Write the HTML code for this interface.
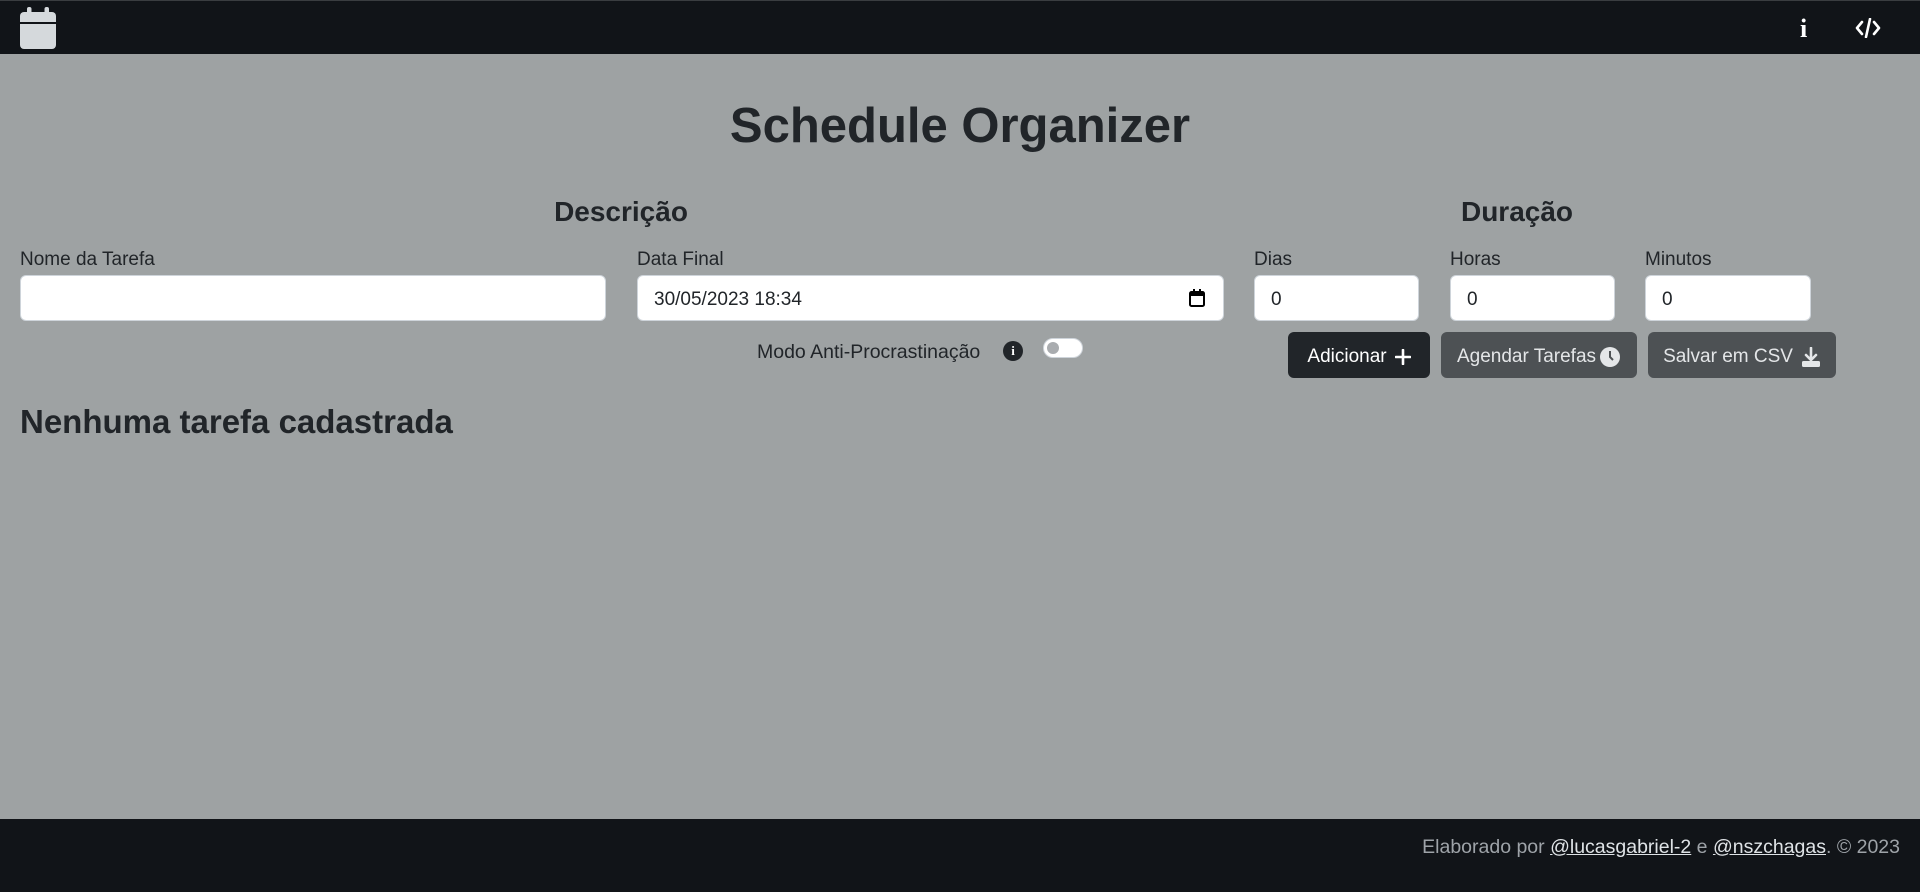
<!DOCTYPE html>
<html><head><meta charset="utf-8"><style>
*{box-sizing:border-box;margin:0;padding:0}
body{width:1920px;height:892px;background:#9ea2a3;font-family:"Liberation Sans",sans-serif;color:#212529;position:relative;overflow:hidden}
.nav{position:absolute;left:0;top:0;width:1920px;height:54px;background:#111418;border-top:1px solid #3a3d40}
.abs{position:absolute}
h1{position:absolute;left:0;width:1920px;top:98px;text-align:center;font-size:49px;font-weight:bold}
.h3{position:absolute;font-size:28px;font-weight:bold;transform:translateX(-50%);top:196px;white-space:nowrap}
.lbl{position:absolute;top:249px;font-size:19px}
.inp{position:absolute;top:275px;height:46px;background:#fff;border:1px solid #ced4da;border-radius:6px;font-size:19px;padding:13px 16px 0}
.btn{position:absolute;top:332px;height:46px;border-radius:6px;color:#fff;font-size:19px;display:flex;align-items:center;justify-content:center;gap:8px;padding-top:4px}
.footer{position:absolute;left:0;top:819px;width:1920px;height:73px;background:#111418;color:#9ea3a8;font-size:19.5px;text-align:right;padding:17px 20px 0 0}
.footer u{color:#dfe3e6}
</style></head><body>
<div class="nav">
<svg class="abs" style="left:20px;top:6px" width="36" height="42" viewBox="0 0 36 42"><rect x="7" y="0" width="4.5" height="9" rx="2" fill="#d5d9dc"/><rect x="24.5" y="0" width="4.5" height="9" rx="2" fill="#d5d9dc"/><rect x="0" y="5" width="36" height="37" rx="4" fill="#d5d9dc"/><rect x="0" y="15" width="36" height="2" fill="#111418"/></svg>
<div class="abs" style="left:1800px;top:13px;color:#fff;font-size:26px;font-weight:bold;font-family:'Liberation Serif',serif">i</div>
<svg class="abs" style="left:1855px;top:17px" width="26" height="20" viewBox="0 0 26 20" fill="none" stroke="#fff" stroke-width="2.6" stroke-linecap="round" stroke-linejoin="round"><path d="M7 4L2 10L7 16M19 4L24 10L19 16M15 1L11 19"/></svg>
</div>
<h1>Schedule Organizer</h1>
<div class="h3" style="left:621px">Descrição</div>
<div class="h3" style="left:1517px">Duração</div>
<div class="lbl" style="left:20px">Nome da Tarefa</div>
<div class="lbl" style="left:637px">Data Final</div>
<div class="lbl" style="left:1254px">Dias</div>
<div class="lbl" style="left:1450px">Horas</div>
<div class="lbl" style="left:1645px">Minutos</div>
<div class="inp" style="left:20px;width:586px"></div>
<div class="inp" style="left:637px;width:587px">30/05/2023 18:34
<svg class="abs" style="right:18px;top:13px" width="16" height="18" viewBox="0 0 16 18"><rect x="1" y="3" width="14" height="14" rx="1.5" fill="none" stroke="#000" stroke-width="2"/><rect x="1" y="3" width="14" height="4" fill="#000"/><rect x="4" y="0" width="2" height="4" fill="#000"/><rect x="10" y="0" width="2" height="4" fill="#000"/></svg></div>
<div class="inp" style="left:1254px;width:165px">0</div>
<div class="inp" style="left:1450px;width:165px">0</div>
<div class="inp" style="left:1645px;width:166px">0</div>
<div class="abs" style="left:757px;top:341px;font-size:19.5px">Modo Anti-Procrastinação</div>
<div class="abs" style="left:1003px;top:341px;width:20px;height:20px;border-radius:50%;background:#212529;color:#fff;font-size:13px;font-weight:bold;text-align:center;line-height:20px;font-family:'Liberation Serif',serif">i</div>
<div class="abs" style="left:1043px;top:338px;width:40px;height:20px;border-radius:10px;background:#fff;border:1px solid #ced4da"><div style="position:absolute;left:3px;top:3px;width:12px;height:12px;border-radius:50%;background:#a9acaf"></div></div>
<div class="btn" style="left:1288px;width:142px;background:#212529">Adicionar <svg width="16" height="16" viewBox="0 0 16 16"><path d="M8 1V15M1 8H15" stroke="#fff" stroke-width="2.6" stroke-linecap="round"/></svg></div>
<div class="btn" style="left:1441px;width:196px;background:#4d5154;color:#e4e6e8;gap:3px">Agendar Tarefas<svg width="22" height="22" viewBox="0 0 22 22"><circle cx="11" cy="11" r="10" fill="#e4e6e8"/><path d="M11 5V11L14 14" stroke="#4d5154" stroke-width="2" fill="none"/></svg></div>
<div class="btn" style="left:1648px;width:188px;background:#4d5154;color:#e4e6e8">Salvar em CSV <svg width="20" height="20" viewBox="0 0 20 20"><path d="M10 1V12M5 8L10 13L15 8" stroke="#e4e6e8" stroke-width="2.6" fill="none" stroke-linecap="round"/><rect x="1" y="14" width="18" height="6" rx="1.5" fill="#e4e6e8"/></svg></div>
<div class="abs" style="left:20px;top:403px;font-size:33px;font-weight:bold;color:#212529">Nenhuma tarefa cadastrada</div>
<div class="footer">Elaborado por <u>@lucasgabriel-2</u> e <u>@nszchagas</u>. © 2023</div>
</body></html>
